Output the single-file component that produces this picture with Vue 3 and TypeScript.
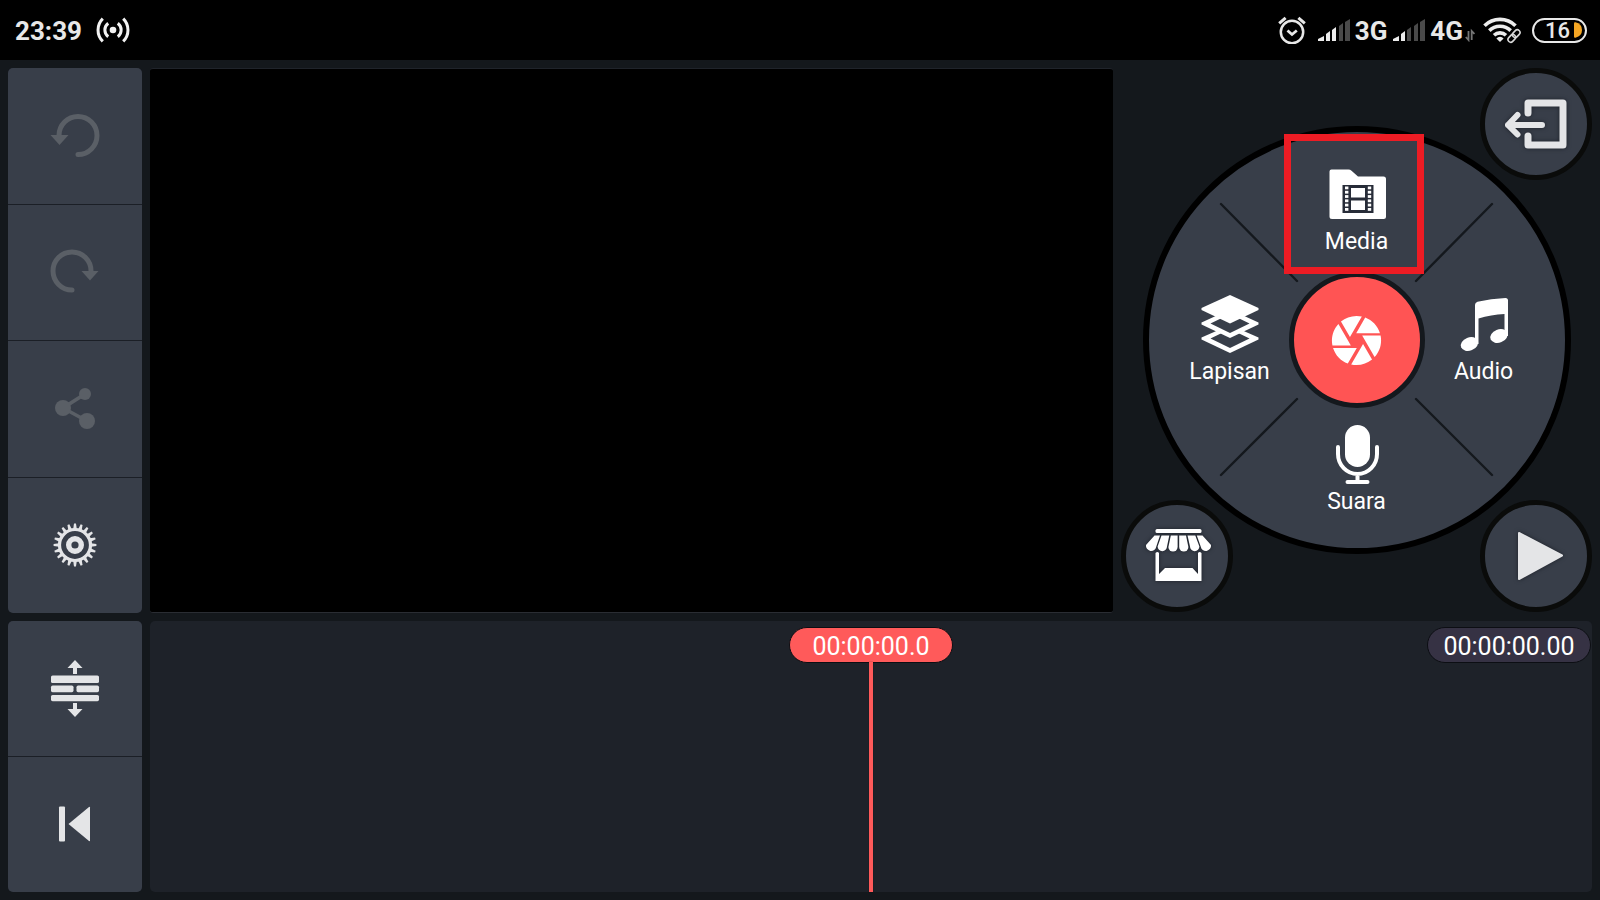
<script setup lang="ts">
import { ref } from 'vue'

const clock = '23:39'
const playheadTime = ref('00:00:00.0')
const totalTime = ref('00:00:00.00')

interface Bar {
  points: string
}

const signalBars: Bar[] = [
  { points: '0,23 0,21 6,18 6,23' },
  { points: '8,23 8,16 12,13 12,23' },
  { points: '14,23 14,12 18,9 18,23' },
  { points: '21,23 21,8 25,5 25,23' },
  { points: '27,23 27,4 32,1 32,23' },
]

const gearTeeth = Array.from({ length: 20 }, (_, i) => i * 18)
const filmHoles = Array.from({ length: 6 }, (_, i) => 22.5 + i * 4.3)
</script>

<template>
  <div class="screen">
    <header class="status">
      <div class="status-left">
        <span class="clock">{{ clock }}</span>
        <svg class="cast" width="34" height="26" viewBox="0 0 34 26" fill="none" stroke="#f2f2f2" stroke-width="3">
          <circle cx="17" cy="13" r="3.3" fill="#f2f2f2" stroke="none" />
          <path d="M12.2 6.2A8.6 8.6 0 0 0 12.2 19.8M21.8 6.2A8.6 8.6 0 0 1 21.8 19.8" />
          <path d="M6.8 1.6A16 16 0 0 0 6.8 24.4M27.2 1.6A16 16 0 0 1 27.2 24.4" />
        </svg>
      </div>
      <div class="status-right">
        <svg class="alarm" width="28" height="28" viewBox="0 0 28 28" fill="none" stroke="#e8e8e8" stroke-width="2.5">
          <circle cx="14" cy="16" r="11.2" />
          <path d="M9.5 14.5L14 18.5L18.8 14.5" stroke-width="2.8" />
          <path d="M1.2 7.4L7.6 1.8M26.8 7.4L20.4 1.8" stroke-width="3" />
        </svg>
        <div class="network">
          <svg width="32" height="24" viewBox="0 0 32 24">
            <polygon v-for="(bar, i) in signalBars" :key="i" :points="bar.points" :fill="i < 3 ? '#ececec' : '#4a4a4a'" />
          </svg>
          <span>3G</span>
        </div>
        <div class="network">
          <svg width="32" height="24" viewBox="0 0 32 24">
            <polygon v-for="(bar, i) in signalBars" :key="i" :points="bar.points" :fill="i < 2 ? '#ececec' : '#4a4a4a'" />
          </svg>
          <span>4G</span>
        </div>
        <svg class="transfer" width="10" height="24" viewBox="0 0 10 24" fill="none" stroke="#757575" stroke-width="1.8">
          <path d="M3.5 13V22L0.8 19M6.7 22V13L9.4 16" />
        </svg>
        <svg class="wifi" width="38" height="28" viewBox="0 0 38 28" fill="none" stroke="#ececec">
          <path d="M1.5 9.8A22 22 0 0 1 32.5 9.8" stroke-width="3.6" />
          <path d="M6.3 14.6A15.2 15.2 0 0 1 27.7 14.6" stroke-width="3.6" />
          <path d="M11 19.2A8.8 8.8 0 0 1 23 19.2" stroke-width="3.6" />
          <path d="M17 26L13.4 22.4A5 5 0 0 1 20.6 22.4Z" fill="#ececec" stroke="none" />
          <path d="M26.5 24.5L35 15.5" stroke="#000" stroke-width="8" />
          <g transform="rotate(-47 31 20)" stroke="#d8d8d8" stroke-width="1.6">
            <rect x="23.5" y="17.3" width="8.5" height="5.4" rx="2.7" />
            <rect x="30" y="17.3" width="8.5" height="5.4" rx="2.7" />
          </g>
        </svg>
        <div class="battery">
          <span>16</span>
          <svg width="8" height="16" viewBox="0 0 8 16"><path d="M0 1.5Q0 0 1.5 0.3Q8 2 8 8Q8 14 1.5 15.7Q0 16 0 14.5Z" fill="#f5a623" /></svg>
        </div>
      </div>
    </header>

    <main class="editor">
      <nav class="rail" aria-label="Project">
        <button type="button" disabled aria-label="Undo">
          <svg width="64" height="64" viewBox="0 0 64 64">
            <path d="M35 50.5A19 19 0 1 0 16 31.5" fill="none" stroke="currentColor" stroke-width="5" stroke-linecap="round" />
            <path d="M7.5 31H25.5L16.5 41Z" fill="currentColor" />
          </svg>
        </button>
        <button type="button" disabled aria-label="Redo">
          <svg width="64" height="64" viewBox="0 0 64 64">
            <path d="M29 50A19 19 0 1 1 48 31" fill="none" stroke="currentColor" stroke-width="5" stroke-linecap="round" />
            <path d="M38.5 31H55.5L47 40.5Z" fill="currentColor" />
          </svg>
        </button>
        <button type="button" disabled aria-label="Share">
          <svg width="64" height="64" viewBox="0 0 64 64" fill="currentColor">
            <path d="M42 17L20 31L44 44" fill="none" stroke="currentColor" stroke-width="3.6" />
            <circle cx="20" cy="31" r="8" />
            <circle cx="42" cy="17" r="6" />
            <circle cx="44" cy="44" r="8" />
          </svg>
        </button>
        <button type="button" aria-label="Settings">
          <svg width="64" height="64" viewBox="0 0 64 64" fill="none" stroke="currentColor">
            <circle cx="32" cy="32" r="15.5" stroke-width="3.2" />
            <circle cx="32" cy="32" r="6.3" stroke-width="5.4" />
            <path v-for="a in gearTeeth" :key="a" :transform="`rotate(${a} 32 32)`" d="M30.2 16L31 10.6H33L33.8 16Z" fill="currentColor" stroke="none" />
          </svg>
        </button>
      </nav>

      <section class="preview" aria-label="Preview"></section>

      <section class="controls" aria-label="Controls">
        <div class="wheel">
          <svg class="spokes" viewBox="0 0 416 416" fill="none" stroke="#14181d" stroke-width="2.4" stroke-linecap="round">
            <path d="M72 72L148 149M343 72L267 149M148 267L72 343M267 267L343 343" />
          </svg>

          <button type="button" class="item media">
            <svg width="60" height="60" viewBox="0 0 60 60">
              <path d="M4.5 5.5H21.5Q23.2 5.5 24.5 6.7L31 12.5H56.5Q59 12.5 59 15V52.5Q59 55 56.5 55H5Q2.5 55 2.5 52.5V7.5Q2.5 5.5 4.5 5.5Z" fill="#fff" />
              <rect x="15.5" y="21" width="31" height="28" fill="#272c38" />
              <path d="M24 24H38V33.5H24ZM24 36.5H38V46H24Z" fill="#fff" />
              <g fill="#fff">
                <template v-for="y in filmHoles" :key="y">
                  <rect x="18" :y="y" width="3.4" height="2.8" />
                  <rect x="40.8" :y="y" width="3.4" height="2.8" />
                </template>
              </g>
            </svg>
            <span>Media</span>
          </button>

          <button type="button" class="item layer">
            <svg width="60" height="60" viewBox="0 0 60 60" fill="#fff">
              <path d="M30 31L58.5 43.5V45.5L30 59L1.5 45.5V43.5Z" />
              <path class="hole" d="M30 35L10.5 44.5L30 54L49.5 44.5Z" />
              <path d="M30 15.5L58.5 28.5V30.5L30 44L1.5 30.5V28.5Z" />
              <path class="hole" d="M30 20L10.5 29.5L30 39L49.5 29.5Z" />
              <path d="M30 1L58.5 14V16L30 29.5L1.5 16V14Z" />
            </svg>
            <span>Lapisan</span>
          </button>

          <button type="button" class="capture" aria-label="Capture">
            <svg width="59" height="59" viewBox="0 0 24 24" fill="#fff">
              <path d="M9.4 10.5l4.77-8.26C13.47 2.09 12.75 2 12 2c-2.4 0-4.6.85-6.32 2.25l3.66 6.35.06-.1zM21.54 9c-.92-2.92-3.15-5.26-6-6.34L11.88 9h9.66zm.26 1h-7.49l.29.5 4.76 8.25C21 16.97 22 14.61 22 12c0-.69-.07-1.35-.2-2zM8.54 12l-3.9-6.75C3.01 7.03 2 9.39 2 12c0 .69.07 1.35.2 2h7.49l-1.15-2zm-6.08 3c.92 2.92 3.15 5.26 6 6.34L12.12 15H2.46zm11.27 0l-3.9 6.76c.7.15 1.42.24 2.17.24 2.4 0 4.6-.85 6.32-2.25l-3.66-6.35-.93 1.6z" />
            </svg>
          </button>

          <button type="button" class="item audio">
            <svg width="60" height="60" viewBox="0 0 60 60" fill="#fff">
              <path d="M21 11Q21 8.5 23.5 7.8Q37 4.5 51.5 4Q54 4 54 6.5V42H50.5V20Q37 20.5 24.5 24.5V50H21Z" />
              <ellipse cx="15.5" cy="50" rx="9" ry="6.6" transform="rotate(-22 15.5 50)" />
              <ellipse cx="45" cy="42" rx="9" ry="6.6" transform="rotate(-22 45 42)" />
            </svg>
            <span>Audio</span>
          </button>

          <button type="button" class="item voice">
            <svg width="60" height="60" viewBox="0 0 60 60" fill="none" stroke="#fff" stroke-width="4" stroke-linecap="round">
              <rect x="18" y="1" width="25" height="42" rx="12.5" fill="#fff" stroke="none" />
              <path d="M11 23V30A19.5 20 0 0 0 50 30V23M30.5 50V57M20.5 58H40.5" />
            </svg>
            <span>Suara</span>
          </button>

          <span class="highlight" aria-hidden="true"></span>
        </div>

        <button type="button" class="corner exit" aria-label="Exit project">
          <svg width="72" height="72" viewBox="0 0 72 72" fill="none" stroke="currentColor">
            <path d="M28 25V15H63V57H28V48" stroke-width="7" stroke-linejoin="round" stroke-linecap="round" />
            <path d="M8 37H42M17.5 27L8 37L17.5 46.5" stroke-width="6" stroke-linecap="round" stroke-linejoin="round" />
          </svg>
        </button>
        <button type="button" class="corner store" aria-label="Asset store">
          <svg width="72" height="72" viewBox="0 0 72 72" fill="#fff">
            <rect x="14.5" y="9" width="46" height="4" rx="1.5" />
            <path d="M13.5 15.5H19L15.3 26.5A5 5 0 0 1 5 25Z" />
            <path d="M20.5 15.5H28.3L26 26.5A4.7 4.7 0 0 1 16.6 26.5Z" />
            <path d="M29.8 15.5H36.6V27A4.6 4.6 0 0 1 27.4 27Z" />
            <path d="M38.2 15.5H45L47.4 27A4.6 4.6 0 0 1 38.2 27Z" />
            <path d="M46.5 15.5H54.3L58.4 26.5A4.7 4.7 0 0 1 49 26.5Z" />
            <path d="M55.8 15.5H61.5L70 25A5 5 0 0 1 59.7 26.5Z" />
            <path d="M14.5 33Q16.5 31 18 33V54L24 48H51.5L57 54V33Q58.5 31 60.5 33V61H14.5Z" />
          </svg>
        </button>
        <button type="button" class="corner play" aria-label="Play">
          <svg width="72" height="72" viewBox="0 0 72 72" fill="currentColor">
            <path d="M19 13L62 35.5L19 59Z" stroke="currentColor" stroke-width="2" stroke-linejoin="round" />
          </svg>
        </button>
      </section>

      <nav class="rail" aria-label="Timeline tools">
        <button type="button" aria-label="Expand timeline">
          <svg width="64" height="64" viewBox="0 0 64 64" fill="currentColor">
            <path d="M32 3L39.5 11H34V17H30V11H24.5ZM32 60L39.5 52H34V46H30V52H24.5Z" />
            <rect x="8" y="18.4" width="48" height="7.6" rx="1.6" />
            <rect x="8" y="28.6" width="22.5" height="6.6" rx="1.6" />
            <rect x="33.5" y="28.6" width="22.5" height="6.6" rx="1.6" />
            <rect x="8" y="38" width="48" height="6.2" rx="1.6" />
          </svg>
        </button>
        <button type="button" aria-label="Jump to start">
          <svg width="64" height="64" viewBox="0 0 64 64" fill="currentColor">
            <rect x="16" y="13.5" width="6" height="35" rx="1" />
            <path d="M25.5 31L46 14Q47 13.5 47 14.5V47.5Q47 48.5 46 48Z" />
          </svg>
        </button>
      </nav>

      <section class="timeline" aria-label="Timeline">
        <div class="playhead">
          <time class="pill current">{{ playheadTime }}</time>
          <i class="needle"></i>
        </div>
        <time class="pill total">{{ totalTime }}</time>
      </section>
    </main>
  </div>
</template>

<style>
body {
  background: #14181c;
}
</style>

<style scoped>
.screen {
  display: flex;
  flex-direction: column;
  min-height: 100vh;
  background: #14181c;
  color: #fff;
  font-family: Roboto, 'Liberation Sans', sans-serif;
}

button {
  margin: 0;
  padding: 0;
  border: 0;
  font: inherit;
  color: #e4e5e7;
  background: #383e49;
  cursor: pointer;
}

svg {
  display: block;
  flex: none;
}

.status {
  display: flex;
  justify-content: space-between;
  align-items: center;
  height: 60px;
  padding: 0 13px 0 15px;
  background: #000;
  color: #e8e8e8;
  font-size: 26px;
  font-weight: 700;
  line-height: 30px;
}

.status-left,
.status-right,
.network,
.battery {
  display: flex;
  align-items: center;
}

.status-left {
  gap: 14px;
}

.clock,
.network span {
  padding-top: 2px;
}

.alarm {
  margin-right: 12px;
}

.network {
  gap: 5px;
  margin-right: 6px;
}

.network + .transfer {
  margin-left: -4px;
}

.wifi {
  margin: 0 11px 0 8px;
}

.battery {
  box-sizing: border-box;
  justify-content: flex-end;
  gap: 4px;
  width: 55px;
  height: 25px;
  padding-right: 3px;
  border: 2px solid #e8e8e8;
  border-radius: 13px;
  font-size: 22px;
  font-weight: 500;
  line-height: 21px;
}

.editor {
  flex: 1;
  display: grid;
  grid-template-columns: 134px minmax(0, 1fr) 471px;
  grid-template-rows: 545fr 271fr;
  gap: 8px;
  padding: 8px;
}

.rail {
  display: flex;
  flex-direction: column;
  gap: 1px;
  overflow: hidden;
  border-radius: 5px;
  background: #1b1f26;
}

.rail button {
  flex: 1;
  display: flex;
  align-items: center;
  justify-content: center;
}

.rail button:disabled {
  color: #5a5f66;
  cursor: default;
}

.preview {
  border-top: 1px solid #20242b;
  border-bottom: 1px solid #2a2d33;
  border-radius: 3px;
  background: #000;
}

.controls {
  display: grid;
  padding-bottom: 1px;
}

.controls > * {
  grid-area: 1 / 1;
}

.wheel {
  position: relative;
  place-self: center;
  display: grid;
  grid-template-columns: repeat(3, 127px);
  grid-template-rows: repeat(3, 130px);
  place-content: center;
  box-sizing: border-box;
  width: 428px;
  height: 428px;
  border: 6px solid #000;
  border-radius: 50%;
  background: #383e49;
}

.spokes {
  position: absolute;
  inset: 0;
}

.hole {
  fill: #383e49;
}

.item {
  position: relative;
  display: flex;
  flex-direction: column;
  align-items: center;
  justify-content: center;
  gap: 4px;
  color: #fff;
  background: none;
  font-size: 23px;
  line-height: 28px;
}

.media {
  grid-area: 1 / 2;
}

.layer {
  grid-area: 2 / 1;
}

.audio {
  grid-area: 2 / 3;
}

.voice {
  grid-area: 3 / 2;
}

.capture {
  position: relative;
  grid-area: 2 / 2;
  place-self: center;
  display: grid;
  place-content: center;
  box-sizing: content-box;
  width: 126px;
  height: 126px;
  margin: -5px;
  border: 5px solid #14181d;
  border-radius: 50%;
  background: #ff5454;
}

.highlight {
  position: absolute;
  top: 2px;
  left: 135px;
  box-sizing: border-box;
  width: 140px;
  height: 140px;
  border: 7px solid #ed1c24;
  pointer-events: none;
}

.corner {
  position: relative;
  display: grid;
  place-content: center;
  box-sizing: border-box;
  width: 112px;
  height: 112px;
  border: 5px solid #0a0b0a;
  border-radius: 50%;
}

.corner svg {
  filter: drop-shadow(0 0 2px #1c2028);
}

.exit {
  place-self: start end;
}

.store {
  place-self: end start;
}

.play {
  place-self: end;
}

.timeline {
  position: relative;
  grid-column: 2 / 4;
  display: grid;
  border-radius: 5px;
  background: #1e2229;
}

.timeline > * {
  grid-area: 1 / 1;
}

.playhead {
  display: flex;
  flex-direction: column;
  align-items: center;
  padding-top: 6px;
}

.pill {
  box-sizing: border-box;
  width: 164px;
  height: 36px;
  border: 1px solid #0c0e13;
  border-radius: 18px;
  font-size: 25px;
  line-height: 38px;
  text-align: center;
}

.current {
  background: #ff5a5a;
}

.needle {
  flex: 1;
  width: 4px;
  margin-top: -1px;
  background: #ff5a5a;
  box-shadow: 0 0 1px #0c0e13;
}

.total {
  place-self: start end;
  margin: 6px 1px 0 0;
  background: #363244;
}
</style>
